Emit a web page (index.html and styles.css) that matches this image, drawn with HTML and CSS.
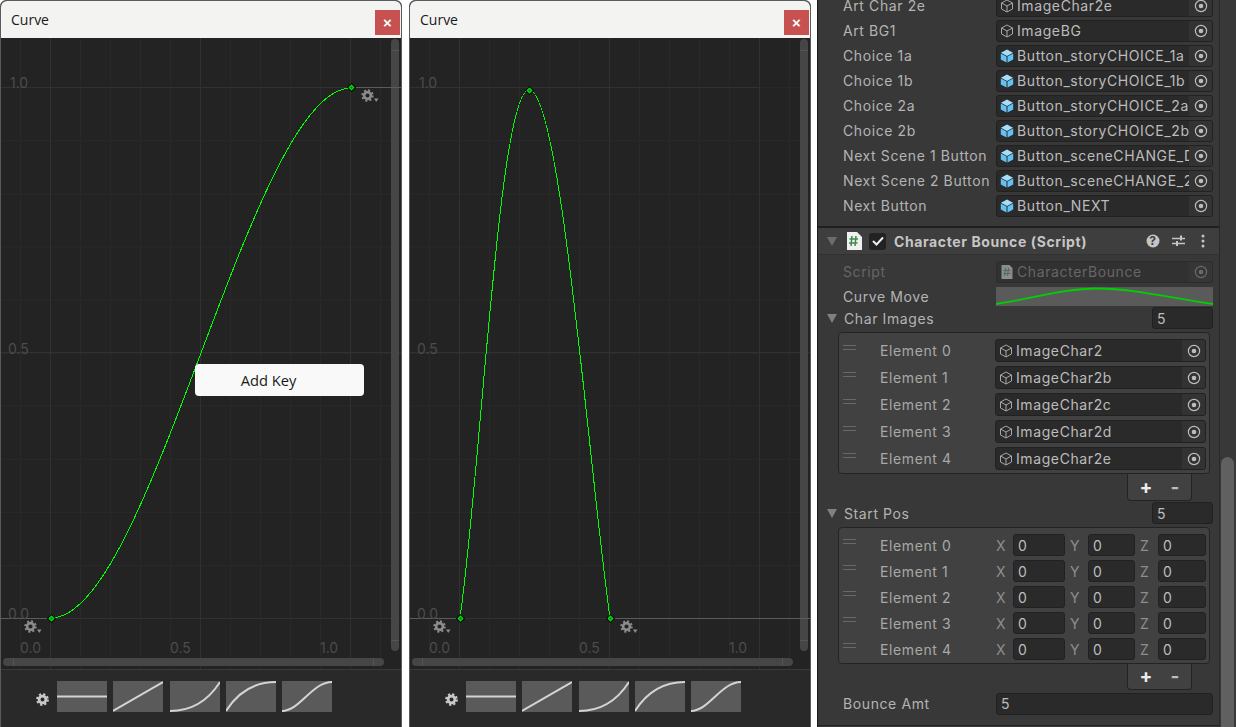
FILE: index.html
```html
<!DOCTYPE html>
<html lang="en">
  <head>
    <meta charset="UTF-8" />
    <title>Curve</title>
    <link rel="stylesheet" href="styles.css">
  </head>
  <body>
    <svg class="defs" width="0" height="0">
      <defs>
        <pattern id="minor-grid" x="20" y="34" width="30" height="53.1" patternUnits="userSpaceOnUse">
          <path d="M0.5 0V53.1M0 0.5H30" fill="none" stroke="#292929" />
        </pattern>
        <symbol id="cog" viewBox="0 0 18 14">
          <circle cx="6.5" cy="6.5" r="3.4" fill="none" stroke="currentColor" stroke-width="2.6" />
          <circle cx="6.5" cy="6.5" r="5.2" fill="none" stroke="currentColor" stroke-width="2" stroke-dasharray="2 2.08" />
          <path d="M13 9.500h4.500l-2.250 3.500z" fill="currentColor" />
        </symbol>
        <symbol id="cog-plain" viewBox="0 0 13 13">
          <circle cx="6.5" cy="6.5" r="3.4" fill="none" stroke="currentColor" stroke-width="2.8" />
          <circle cx="6.5" cy="6.5" r="5.3" fill="none" stroke="currentColor" stroke-width="2.2" stroke-dasharray="2.2 1.96" />
        </symbol>
        <symbol id="wire-cube" viewBox="0 0 14 14">
          <path d="M7 1l5.500 3v6L7 13l-5.500-3V4zM1.500 4L7 7l5.500-3M7 7v6" fill="none" stroke="#a8a8a8" stroke-width="1" />
        </symbol>
        <symbol id="blue-cube" viewBox="0 0 14 14">
          <path d="M7 .6l6 3.100L7 6.900 1 3.700z" fill="#a5defa" />
          <path d="M.8 4.600l5.700 3v6L.8 10.600z" fill="#63c1f3" />
          <path d="M13.200 4.600l-5.700 3v6l5.700-3z" fill="#63c1f3" />
        </symbol>
        <symbol id="target" viewBox="0 0 14 14">
          <circle cx="7" cy="7" r="5.600" fill="none" stroke="currentColor" stroke-width="1.200" />
          <circle cx="7" cy="7" r="2.300" fill="currentColor" />
        </symbol>
        <g id="point">
          <path d="M0-4.600L4.600 0 0 4.600-4.600 0z" fill="#000" />
          <path d="M0-3.200L3.200 0 0 3.200-3.200 0z" fill="#00e000" />
          <circle r="1" fill="#063" />
        </g>
        <g id="canvas-base">
          <rect x="0" y="38" width="402" height="632" fill="url(#minor-grid)" />
          <path d="M50.500 38V670M200.500 38V670M350.500 38V670M0 352.500H402" stroke="#313131" fill="none" />
          <path d="M0 87.500H350M50 618.500H402" stroke="#313131" fill="none" />
          <rect x="391" y="39" width="8" height="612" rx="4" fill="#464646" />
          <path d="M391 50.500h8M391 640.500h8" stroke="#555" />
          <rect x="3" y="658" width="381" height="8" rx="4" fill="#464646" />
          <path d="M13.500 658v8M373.500 658v8" stroke="#555" />
        </g>
      </defs>
    </svg>

    <div class="page">
      <div class="curve-window">
        <div class="title-bar">
          <span class="title">Curve</span>
          <span class="close">×</span>
        </div>
        <div class="canvas">
          <svg class="graph" width="400" height="631" viewBox="1 38 400 631">
            <use href="#canvas-base" />
            <path d="M352 87.500H402" stroke="#5c5c5c" />
            <path d="M0 618.500H50" stroke="#5c5c5c" />
            <text class="axis" x="10" y="88">1.0</text>
            <text class="axis" x="8" y="354">0.5</text>
            <text class="axis" x="8" y="619">0.0</text>
            <text class="axis" x="20" y="653">0.0</text>
            <text class="axis" x="170" y="653">0.5</text>
            <text class="axis" x="320" y="653">1.0</text>
            <path class="curve" d="M51 618C151 618 251 88 351 88" />
            <use href="#point" x="51.500" y="618.500" />
            <use href="#point" x="351.500" y="87.500" />
            <use href="#cog" x="24" y="620" width="18" height="14" class="cog" />
            <use href="#cog" x="361" y="89" width="18" height="14" class="cog" />
          </svg>
          <div class="menu">Add Key</div>
        </div>
        <div class="presets">
          <svg class="preset-cog" width="13" height="13"><use href="#cog-plain" /></svg>
          <svg class="preset" width="50" height="31"><path d="M0 15.500H50" /></svg>
          <svg class="preset" width="50" height="31"><path d="M0 30L50 1" /></svg>
          <svg class="preset" width="50" height="31"><path d="M0 30C22 30 38 20 50 1" /></svg>
          <svg class="preset" width="50" height="31"><path d="M0 30C12 11 28 1 50 1" /></svg>
          <svg class="preset" width="50" height="31"><path d="M0 30C18 30 30 1 50 1" /></svg>
        </div>
      </div>

      <div class="curve-window">
        <div class="title-bar">
          <span class="title">Curve</span>
          <span class="close">×</span>
        </div>
        <div class="canvas">
          <svg class="graph" width="400" height="631" viewBox="1 38 400 631">
            <use href="#canvas-base" />
            <path d="M0 618.500H50M202 618.500H402" stroke="#5c5c5c" />
            <text class="axis" x="10" y="88">1.0</text>
            <text class="axis" x="8" y="354">0.5</text>
            <text class="axis" x="8" y="619">0.0</text>
            <text class="axis" x="20" y="653">0.0</text>
            <text class="axis" x="170" y="653">0.5</text>
            <text class="axis" x="320" y="653">1.0</text>
            <path class="curve" d="M51 618C72 470 90 90 120 90C152 90 180 470 201 618" />
            <use href="#point" x="51.500" y="618.500" />
            <use href="#point" x="120.500" y="90.500" />
            <use href="#point" x="201.500" y="618.500" />
            <use href="#cog" x="24" y="620" width="18" height="14" class="cog" />
            <use href="#cog" x="211" y="620" width="18" height="14" class="cog" />
          </svg>
        </div>
        <div class="presets">
          <svg class="preset-cog" width="13" height="13"><use href="#cog-plain" /></svg>
          <svg class="preset" width="50" height="31"><path d="M0 15.500H50" /></svg>
          <svg class="preset" width="50" height="31"><path d="M0 30L50 1" /></svg>
          <svg class="preset" width="50" height="31"><path d="M0 30C22 30 38 20 50 1" /></svg>
          <svg class="preset" width="50" height="31"><path d="M0 30C12 11 28 1 50 1" /></svg>
          <svg class="preset" width="50" height="31"><path d="M0 30C18 30 30 1 50 1" /></svg>
        </div>
      </div>

      <div class="inspector">
        <div class="panel">
          <div class="fields">
            <div class="row"><span class="label">Art Char 2e</span><div class="field"><svg class="cube"><use href="#wire-cube" /></svg><span class="value">ImageChar2e</span><span class="pick"><svg class="dot"><use href="#target" /></svg></span></div></div>
            <div class="row"><span class="label">Art BG1</span><div class="field"><svg class="cube"><use href="#wire-cube" /></svg><span class="value">ImageBG</span><span class="pick"><svg class="dot"><use href="#target" /></svg></span></div></div>
            <div class="row"><span class="label">Choice 1a</span><div class="field"><svg class="cube"><use href="#blue-cube" /></svg><span class="value">Button_storyCHOICE_1a</span><span class="pick"><svg class="dot"><use href="#target" /></svg></span></div></div>
            <div class="row"><span class="label">Choice 1b</span><div class="field"><svg class="cube"><use href="#blue-cube" /></svg><span class="value">Button_storyCHOICE_1b</span><span class="pick"><svg class="dot"><use href="#target" /></svg></span></div></div>
            <div class="row"><span class="label">Choice 2a</span><div class="field"><svg class="cube"><use href="#blue-cube" /></svg><span class="value">Button_storyCHOICE_2a</span><span class="pick"><svg class="dot"><use href="#target" /></svg></span></div></div>
            <div class="row"><span class="label">Choice 2b</span><div class="field"><svg class="cube"><use href="#blue-cube" /></svg><span class="value">Button_storyCHOICE_2b</span><span class="pick"><svg class="dot"><use href="#target" /></svg></span></div></div>
            <div class="row"><span class="label">Next Scene 1 Button</span><div class="field"><svg class="cube"><use href="#blue-cube" /></svg><span class="value">Button_sceneCHANGE_Day</span><span class="pick"><svg class="dot"><use href="#target" /></svg></span></div></div>
            <div class="row"><span class="label">Next Scene 2 Button</span><div class="field"><svg class="cube"><use href="#blue-cube" /></svg><span class="value">Button_sceneCHANGE_2</span><span class="pick"><svg class="dot"><use href="#target" /></svg></span></div></div>
            <div class="row"><span class="label">Next Button</span><div class="field"><svg class="cube"><use href="#blue-cube" /></svg><span class="value">Button_NEXT</span><span class="pick"><svg class="dot"><use href="#target" /></svg></span></div></div>
          </div>

          <div class="component-header">
            <span class="arrow dim"></span>
            <svg class="script-icon" width="16" height="18" viewBox="0 0 16 18">
              <path d="M1 0h10l5 5v13H1z" fill="#f0f0f0" />
              <path d="M6 4l-1 10M10 4L9 14M3.500 7H12M3 11h8.500" stroke="#3c8a4c" stroke-width="1.500" fill="none" />
            </svg>
            <span class="checkbox">
              <svg width="12" height="10" viewBox="0 0 12 10"><path d="M1 5l3.500 3.500L11 1.500" fill="none" stroke="#eee" stroke-width="2" /></svg>
            </span>
            <span class="component-name">Character Bounce (Script)</span>
            <span class="tools">
              <svg width="14" height="14" viewBox="0 0 14 14">
                <circle cx="7" cy="7" r="6.500" fill="#c4c4c4" />
                <text class="help" x="7" y="11">?</text>
              </svg>
              <svg width="13" height="14" viewBox="0 0 13 14">
                <path d="M0 4.500h13M0 9.500h13" stroke="#c4c4c4" stroke-width="1.400" />
                <path d="M9 1.500v5M5 7v5" stroke="#c4c4c4" stroke-width="2" />
              </svg>
              <svg class="more" width="4" height="14" viewBox="0 0 4 14">
                <circle cx="2" cy="2" r="1.500" fill="#c4c4c4" />
                <circle cx="2" cy="7" r="1.500" fill="#c4c4c4" />
                <circle cx="2" cy="12" r="1.500" fill="#c4c4c4" />
              </svg>
            </span>
          </div>

          <div class="row script-row disabled"><span class="label">Script</span><div class="field"><svg class="cube" viewBox="0 0 14 14"><path d="M1.500 0h8l3 3v11h-11z" fill="#8c8c8c" /><path d="M5.500 3l-1 8M8.500 3l-1 8M3.500 5.500h7M3.500 8.500h7" stroke="#4c6f52" stroke-width="1.100" /></svg><span class="value">CharacterBounce</span><span class="pick"><svg class="dot"><use href="#target" /></svg></span></div></div>
          <div class="row"><span class="label">Curve Move</span>
            <svg class="curve-field" width="217" height="19" viewBox="0 0 217 19">
              <path d="M0 17C35 12 68 1.500 101 1.500C140 1.500 178 12 217 17" fill="none" stroke="#00d000" stroke-width="1.800" />
            </svg>
          </div>

          <div class="foldout"><span class="arrow"></span><span class="foldout-name">Char Images</span><span class="count">5</span></div>
          <div class="list">
            <div class="list-row"><span class="handle"></span><span class="element">Element 0</span><div class="field"><svg class="cube"><use href="#wire-cube" /></svg><span class="value">ImageChar2</span><span class="pick"><svg class="dot"><use href="#target" /></svg></span></div></div>
            <div class="list-row"><span class="handle"></span><span class="element">Element 1</span><div class="field"><svg class="cube"><use href="#wire-cube" /></svg><span class="value">ImageChar2b</span><span class="pick"><svg class="dot"><use href="#target" /></svg></span></div></div>
            <div class="list-row"><span class="handle"></span><span class="element">Element 2</span><div class="field"><svg class="cube"><use href="#wire-cube" /></svg><span class="value">ImageChar2c</span><span class="pick"><svg class="dot"><use href="#target" /></svg></span></div></div>
            <div class="list-row"><span class="handle"></span><span class="element">Element 3</span><div class="field"><svg class="cube"><use href="#wire-cube" /></svg><span class="value">ImageChar2d</span><span class="pick"><svg class="dot"><use href="#target" /></svg></span></div></div>
            <div class="list-row"><span class="handle"></span><span class="element">Element 4</span><div class="field"><svg class="cube"><use href="#wire-cube" /></svg><span class="value">ImageChar2e</span><span class="pick"><svg class="dot"><use href="#target" /></svg></span></div></div>
          </div>
          <div class="list-footer"><span class="plus">+</span><span class="minus">-</span></div>

          <div class="foldout start-pos"><span class="arrow"></span><span class="foldout-name">Start Pos</span><span class="count">5</span></div>
          <div class="list vectors">
            <div class="list-row"><span class="handle"></span><span class="element">Element 0</span><div class="vec"><span class="axis-name">X</span><span class="num">0</span><span class="axis-name pad">Y</span><span class="num">0</span><span class="axis-name pad">Z</span><span class="num">0</span></div></div>
            <div class="list-row"><span class="handle"></span><span class="element">Element 1</span><div class="vec"><span class="axis-name">X</span><span class="num">0</span><span class="axis-name pad">Y</span><span class="num">0</span><span class="axis-name pad">Z</span><span class="num">0</span></div></div>
            <div class="list-row"><span class="handle"></span><span class="element">Element 2</span><div class="vec"><span class="axis-name">X</span><span class="num">0</span><span class="axis-name pad">Y</span><span class="num">0</span><span class="axis-name pad">Z</span><span class="num">0</span></div></div>
            <div class="list-row"><span class="handle"></span><span class="element">Element 3</span><div class="vec"><span class="axis-name">X</span><span class="num">0</span><span class="axis-name pad">Y</span><span class="num">0</span><span class="axis-name pad">Z</span><span class="num">0</span></div></div>
            <div class="list-row"><span class="handle"></span><span class="element">Element 4</span><div class="vec"><span class="axis-name">X</span><span class="num">0</span><span class="axis-name pad">Y</span><span class="num">0</span><span class="axis-name pad">Z</span><span class="num">0</span></div></div>
          </div>
          <div class="list-footer short"><span class="plus">+</span><span class="minus">-</span></div>

          <div class="row bounce"><span class="label">Bounce Amt</span><div class="field"><span class="value">5</span></div></div>
        </div>
        <div class="scrollbar"><div class="thumb"></div></div>
      </div>
    </div>
  </body>
</html>
```

FILE: styles.css
```css
html,
body {
  margin: 0;
  height: 727px;
  overflow: hidden;
  background: #fff;
}

body {
  font-family: Inter, "Liberation Sans", sans-serif;
}

.defs {
  display: block;
  height: 0;
}

.page {
  display: flex;
  height: 727px;
}

/* curve windows */
.curve-window {
  width: 400px;
  height: 726px;
  margin-right: 7px;
  border: 1px solid #5a5a5a;
  border-radius: 6px 6px 0 0;
  background: #292929;
  display: flex;
  flex-direction: column;
  flex-shrink: 0;
}

.title-bar {
  height: 37px;
  background: #f3f3f2;
  border-radius: 6px 6px 0 0;
  display: flex;
  align-items: center;
  justify-content: space-between;
  padding: 0 1px 0 10px;
}

.title {
  font-family: "Open Sans", "Noto Sans", sans-serif;
  font-size: 14px;
  color: #1a1a1a;
}

.close {
  width: 25px;
  height: 25px;
  margin-top: 5px;
  background: #c75050;
  color: #fff;
  font-family: "Liberation Sans", sans-serif;
  font-size: 15px;
  font-weight: bold;
  line-height: 25px;
  text-align: center;
}

.canvas {
  position: relative;
  height: 631px;
  background: #232323;
}

.graph {
  display: block;
}

.axis {
  font-family: Inter, sans-serif;
  font-size: 14px;
  fill: #4c4c4c;
}

.curve {
  fill: none;
  stroke: #00ff00;
  stroke-width: 1;
  shape-rendering: crispEdges;
}

.cog {
  color: #8c8c8c;
}

.menu {
  position: absolute;
  left: 194px;
  top: 326px;
  width: 169px;
  height: 32px;
  box-sizing: border-box;
  padding-right: 22px;
  background: #f9f9f9;
  border-radius: 4px;
  font-family: "Open Sans", "Noto Sans", sans-serif;
  font-size: 14.700px;
  line-height: 33px;
  text-align: center;
  color: #1a1a1a;
}

.presets {
  flex: 1;
  border-top: 1px solid #3a3a3a;
  display: flex;
  align-items: flex-start;
  gap: 6px;
  padding: 11px 0 0 33px;
}

.preset-cog {
  color: #c8c8c8;
  margin: 12px 2px 0 2px;
}

.preset {
  background: #5a5a5a;
}

.preset path {
  fill: none;
  stroke: #d4d4d4;
  stroke-width: 2;
}

.preset:nth-child(4) {
  margin-left: 1px;
}

/* inspector */
.inspector {
  flex: 1;
  display: flex;
  margin-left: -1px;
  border-left: 1px solid #1c1c1c;
  height: 727px;
  overflow: hidden;
  background: #383838;
}

.panel {
  width: 402px;
  flex-shrink: 0;
  height: 726px;
  border-right: 1px solid #2a2a2a;
  border-bottom: 1px solid #222;
  box-sizing: border-box;
  font-size: 14px;
  letter-spacing: 0.6px;
  color: #b4b4b4;
}

.fields {
  margin-top: -7px;
  height: 233px;
  border-bottom: 2px solid #1f1f1f;
}

.row {
  height: 25px;
  display: flex;
  align-items: center;
  padding: 0 6px 0 25px;
}

.label {
  width: 153px;
  flex-shrink: 0;
  white-space: nowrap;
}

.field {
  flex: 1;
  min-width: 0;
  height: 22px;
  box-sizing: border-box;
  border: 1px solid #212121;
  border-radius: 3px;
  background: #2a2a2a;
  display: flex;
  align-items: center;
  overflow: hidden;
}

.cube {
  width: 14px;
  height: 14px;
  margin: 0 3px 0 3px;
  flex-shrink: 0;
}

.value {
  flex: 1;
  min-width: 0;
  overflow: hidden;
  white-space: nowrap;
  color: #bcbcbc;
}

.bounce .value {
  padding-left: 4px;
}

.pick {
  width: 23px;
  height: 100%;
  flex-shrink: 0;
  background: #333;
  display: flex;
  align-items: center;
  justify-content: center;
  color: #bcbcbc;
}

.dot {
  width: 14px;
  height: 14px;
}

.component-header {
  height: 26px;
  background: #3e3e3e;
  border-bottom: 1px solid #323232;
  display: flex;
  align-items: center;
  padding-left: 9px;
}

.arrow {
  width: 0;
  height: 0;
  border-left: 5px solid transparent;
  border-right: 5px solid transparent;
  border-top: 9px solid #808080;
  flex-shrink: 0;
}

.arrow.dim {
  border-top-color: #6c6c6c;
}

.script-icon {
  margin-left: 9px;
}

.checkbox {
  width: 17px;
  height: 17px;
  margin-left: 7px;
  background: #222;
  border-radius: 3px;
  display: flex;
  align-items: center;
  justify-content: center;
}

.component-name {
  margin-left: 8px;
  font-weight: 700;
  color: #c6c6c6;
}

.tools {
  margin-left: auto;
  margin-right: 14px;
  display: flex;
  align-items: center;
  gap: 12px;
}

.more {
  margin-left: 4px;
}

.help {
  font-size: 12px;
  font-weight: 700;
  text-anchor: middle;
  fill: #3e3e3e;
}

.script-row {
  margin-top: 4px;
}

.disabled .label,
.disabled .value {
  color: #666;
}

.disabled .field {
  background: #313131;
  border-color: #2c2c2c;
}

.disabled .pick {
  background: #363636;
  color: #6a6a6a;
}

.curve-field {
  background: #5a5a5a;
  flex: 1;
}

.foldout {
  height: 22px;
  margin-top: -2px;
  display: flex;
  align-items: center;
  padding: 0 6px 0 9px;
}

.foldout-name {
  margin-left: 7px;
}

.count {
  margin-left: auto;
  width: 61px;
  height: 22px;
  box-sizing: border-box;
  border: 1px solid #212121;
  border-radius: 3px;
  background: #2a2a2a;
  padding-left: 4px;
  line-height: 21px;
  color: #bcbcbc;
}

.list {
  margin: 3px 9px 0 20px;
  padding: 4px 0 0;
  background: #414141;
  border: 1px solid #232323;
  border-radius: 4px;
  box-sizing: border-box;
  height: 142px;
}

.list.vectors {
  height: 137px;
}

.list-row {
  height: 27px;
  display: flex;
  align-items: center;
  padding: 0 3px 0 4px;
}

.vectors .list-row {
  height: 26px;
}

.handle {
  width: 13px;
  height: 3px;
  margin-top: -7px;
  border-top: 1px solid #686868;
  border-bottom: 1px solid #686868;
  flex-shrink: 0;
}

.element {
  width: 115px;
  margin-left: 24px;
  flex-shrink: 0;
  color: #a8a8a8;
}

.list-row .field {
  height: 23px;
}

.vec {
  flex: 1;
  display: grid;
  grid-template-columns: 17px 52px 23px 47px 23px 48px;
  align-items: center;
  padding-left: 1px;
}

.axis-name {
  color: #8e8e8e;
}

.axis-name.pad {
  padding-left: 5px;
}

.num {
  height: 22px;
  box-sizing: border-box;
  border: 1px solid #212121;
  border-radius: 3px;
  background: #2a2a2a;
  padding-left: 4px;
  line-height: 21px;
  color: #bcbcbc;
}

.list-footer {
  width: 65px;
  height: 27px;
  margin-left: 309px;
  box-sizing: border-box;
  background: #414141;
  border: 1px solid #232323;
  border-top: none;
  border-radius: 0 0 4px 4px;
  display: flex;
  align-items: center;
  justify-content: center;
  gap: 18px;
  font-weight: 700;
  font-size: 19px;
  letter-spacing: 0;
}

.list-footer.short {
  height: 26px;
}

.plus {
  color: #ececec;
}

.minus {
  color: #bcbcbc;
}

.start-pos {
  margin-top: 1px;
}

.bounce {
  margin-top: 1px;
}

.scrollbar {
  flex: 1;
  padding-left: 1px;
}

.thumb {
  width: 13px;
  height: 280px;
  margin-top: 457px;
  background: #606060;
  border-radius: 7px 7px 0 0;
}
```
